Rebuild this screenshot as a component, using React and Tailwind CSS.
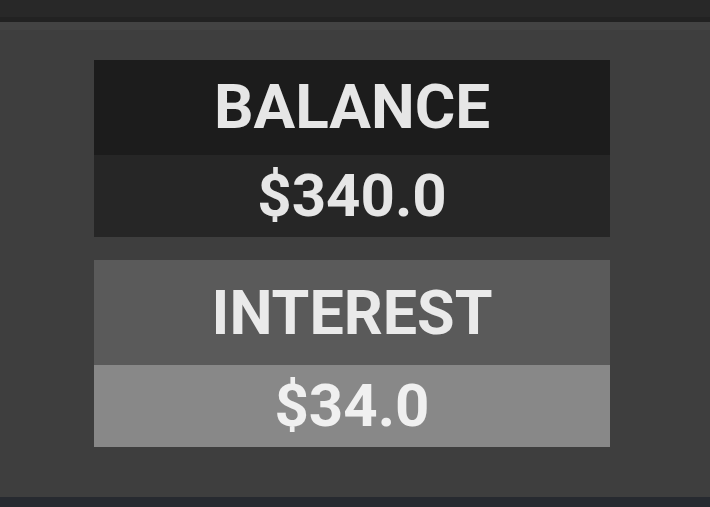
export default function App() {
  return (
    <div className="w-[710px] h-[507px] bg-[#3e3e3e] flex flex-col font-['Roboto',sans-serif] overflow-hidden">
      {/* top bar */}
      <div className="h-[17px] bg-[#282828] shrink-0" />
      <div className="h-[5px] bg-[#222222] shrink-0" />
      <div className="h-[8px] bg-[#434343] shrink-0" />

      <div className="flex-1 pt-[30px] pl-[94px]">
        <div className="w-[516px] flex flex-col">
          {/* balance */}
          <div className="h-[95px] bg-[#1c1c1c] flex items-center justify-center text-[62px] font-bold text-[#e6e6e6] leading-none">
            <span className="-mt-[2px]">BALANCE</span>
          </div>
          <div className="h-[82px] bg-[#262626] flex items-center justify-center text-[60px] font-bold text-[#e6e6e6] leading-none">
            $340.0
          </div>

          {/* interest */}
          <div className="mt-[23px] h-[105px] bg-[#5a5a5a] flex items-center justify-center text-[61px] font-bold text-[#eaeaea] leading-none">
            <span className="mt-[2px]">INTEREST</span>
          </div>
          <div className="h-[82px] bg-[#888888] flex items-center justify-center text-[60px] font-bold text-[#f0f0f0] leading-none">
            $34.0
          </div>
        </div>
      </div>

      {/* bottom strip */}
      <div className="h-[10px] bg-[#272a30] shrink-0" />
    </div>
  );
}
